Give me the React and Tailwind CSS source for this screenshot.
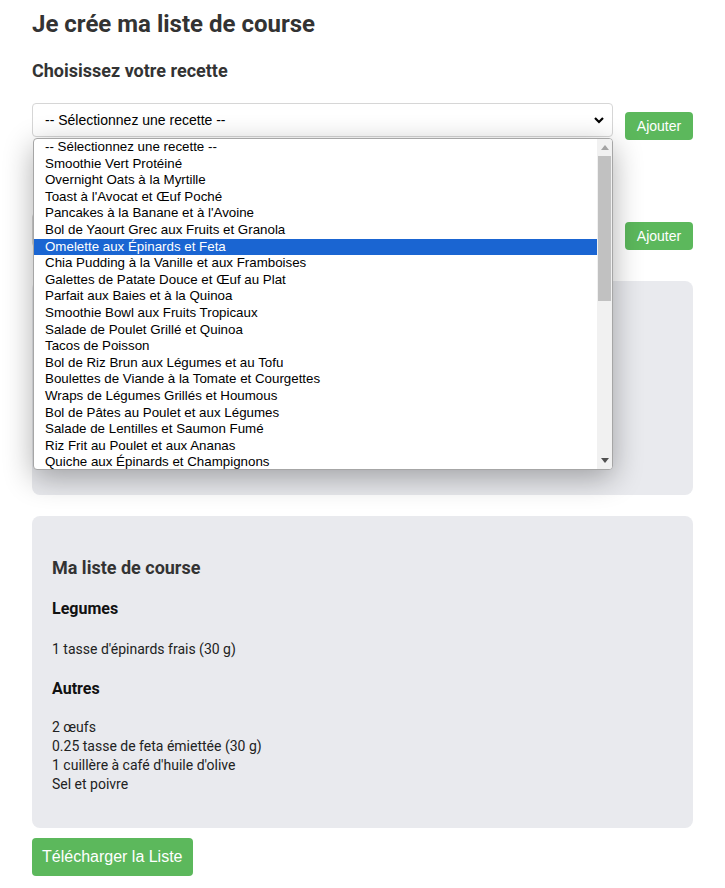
import React from 'react';

const recipes = [
    '-- Sélectionnez une recette --',
    'Smoothie Vert Protéiné',
    'Overnight Oats à la Myrtille',
    "Toast à l'Avocat et Œuf Poché",
    "Pancakes à la Banane et à l'Avoine",
    'Bol de Yaourt Grec aux Fruits et Granola',
    'Omelette aux Épinards et Feta',
    'Chia Pudding à la Vanille et aux Framboises',
    'Galettes de Patate Douce et Œuf au Plat',
    'Parfait aux Baies et à la Quinoa',
    'Smoothie Bowl aux Fruits Tropicaux',
    'Salade de Poulet Grillé et Quinoa',
    'Tacos de Poisson',
    'Bol de Riz Brun aux Légumes et au Tofu',
    'Boulettes de Viande à la Tomate et Courgettes',
    'Wraps de Légumes Grillés et Houmous',
    'Bol de Pâtes au Poulet et aux Légumes',
    'Salade de Lentilles et Saumon Fumé',
    'Riz Frit au Poulet et aux Ananas',
    'Quiche aux Épinards et Champignons',
];

const SELECTED = 6;

const AddButton = () => (
    <button className="mt-[9px] h-[28px] w-[68px] shrink-0 rounded-[4px] bg-[#5cb85c] text-[14px] text-white font-['Liberation_Sans',Arial,sans-serif]">
        Ajouter
    </button>
);

const SelectBox = ({ label }) => (
    <div className="flex h-[34px] flex-1 items-center justify-between rounded-[4px] border border-[#d6d6d6] bg-white pl-[12px] pr-[7px] text-[14px] text-black font-['Liberation_Sans',Arial,sans-serif]">
        <span>{label}</span>
        <svg width="12" height="12" viewBox="0 0 12 12">
            <path d="M2 4 L6 8 L10 4" fill="none" stroke="#000" strokeWidth="2.2" />
        </svg>
    </div>
);

const Dropdown = () => (
    <div className="absolute left-[33px] top-[138px] flex h-[332px] w-[580px] overflow-hidden rounded-[4px] border border-[#a6a6a6] bg-white shadow-[0_8px_30px_rgba(0,0,0,0.32)] font-['Liberation_Sans',Arial,sans-serif]">
        <ul className="flex-1">
            {recipes.map((r, i) => (
                <li
                    key={r}
                    className={
                        i === SELECTED
                            ? 'h-[16.6px] bg-[#1a65d2] pl-[11px] text-[13.33px] leading-[16.6px] text-white'
                            : 'h-[16.6px] pl-[11px] text-[13.33px] leading-[16.6px] text-black'
                    }
                >
                    {r}
                </li>
            ))}
        </ul>
        {/* scrollbar */}
        <div className="flex w-[15px] flex-col items-center bg-[#f1f1f1]">
            <div className="flex h-[17px] items-center justify-center">
                <svg width="8" height="5" viewBox="0 0 8 5">
                    <path d="M0 5 L4 0 L8 5 Z" fill="#a3a3a3" />
                </svg>
            </div>
            <div className="h-[145px] w-[13px] bg-[#c1c1c1]" />
            <div className="flex-1" />
            <div className="flex h-[17px] items-center justify-center">
                <svg width="8" height="5" viewBox="0 0 8 5">
                    <path d="M0 0 L8 0 L4 5 Z" fill="#505050" />
                </svg>
            </div>
        </div>
    </div>
);

const App = () => {
    return (
        <div className="relative min-h-[888px] bg-white px-8 pt-[10px] font-['Roboto',sans-serif]">
            <h1 className="text-[24px] font-bold leading-[29px] text-[#333]">Je crée ma liste de course</h1>
            <h2 className="mt-[21px] text-[18px] font-bold leading-[22px] text-[#333]">Choisissez votre recette</h2>

            <div className="mt-[21px] flex items-start gap-[12px]">
                <SelectBox label="-- Sélectionnez une recette --" />
                <AddButton />
            </div>

            {/* second row sits under the open list */}
            <div className="mt-[73px] flex items-start gap-[12px]">
                <SelectBox label="" />
                <AddButton />
            </div>

            <div className="mt-[31px] h-[214px] rounded-[8px] bg-[#e9eaee]" />

            <div className="mt-[21px] rounded-[8px] bg-[#e9eaee] px-5 pb-[34px] pt-5">
                <h3 className="mt-[21px] text-[18px] font-bold leading-[22px] text-[#333]">Ma liste de course</h3>
                <h4 className="mt-[20px] text-[16px] font-bold leading-[19px] text-[#111]">Legumes</h4>
                <ul className="mt-[22px] text-[14px] leading-[19px] text-[#222]">
                    <li>1 tasse d'épinards frais (30 g)</li>
                </ul>
                <h4 className="mt-[20px] text-[16px] font-bold leading-[19px] text-[#111]">Autres</h4>
                <ul className="mt-[20px] text-[14px] leading-[19px] text-[#222]">
                    <li>2 œufs</li>
                    <li>0.25 tasse de feta émiettée (30 g)</li>
                    <li>1 cuillère à café d'huile d'olive</li>
                    <li>Sel et poivre</li>
                </ul>
            </div>

            <button className="mt-[10px] h-[38px] rounded-[4px] bg-[#5cb85c] px-[10px] text-[16px] text-white font-['Liberation_Sans',Arial,sans-serif]">
                Télécharger la Liste
            </button>

            <Dropdown />
        </div>
    );
};

export default App;
